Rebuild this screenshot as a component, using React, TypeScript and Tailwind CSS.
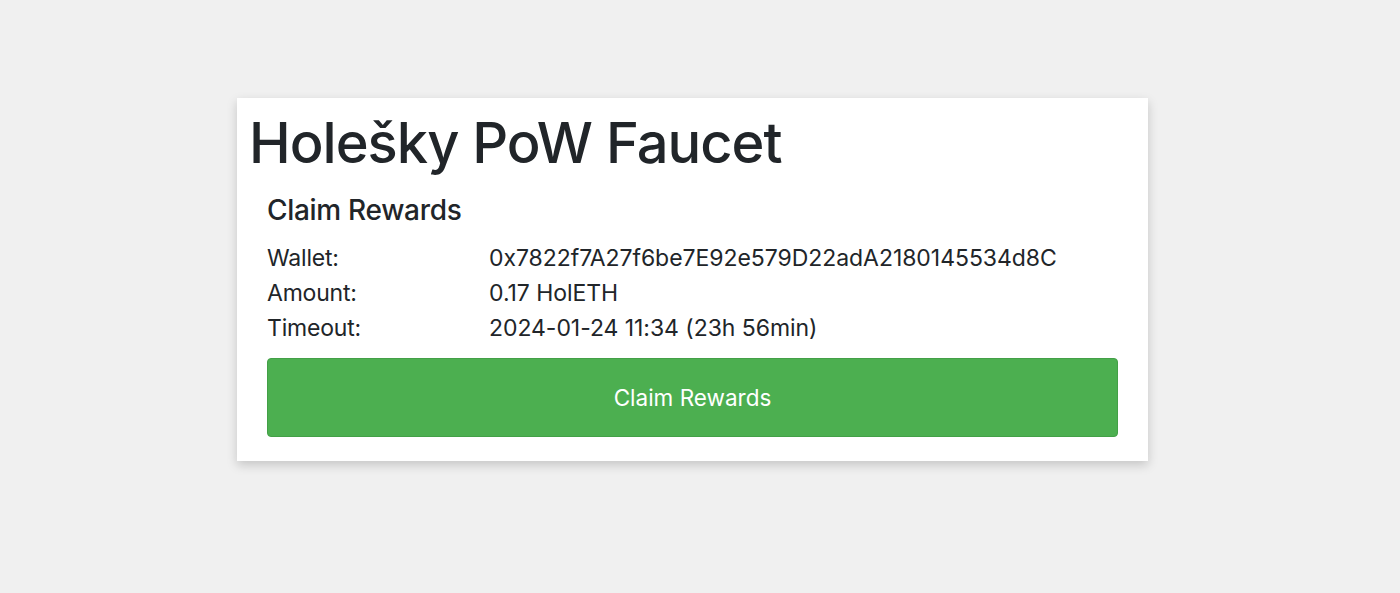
const rows = [
  { label: "Wallet:", value: "0x7822f7A27f6be7E92e579D22adA2180145534d8C" },
  { label: "Amount:", value: "0.17 HolETH" },
  { label: "Timeout:", value: "2024-01-24 11:34 (23h 56min)" },
];

export default function App() {
  return (
    <div
      className="min-h-[593px] w-full bg-[#f0f0f0] pt-[98px] pl-[237px] text-[#212529]"
      style={{ fontFamily: "Inter, 'Noto Sans', sans-serif" }}
    >
      <div className="w-[911px] bg-white pt-[10px] pb-[24px] shadow-[0_4px_10px_rgba(0,0,0,0.18)]">
        <h1 className="pl-[12px] text-[56px] leading-[70px] font-medium tracking-[-1px]">
          Holešky PoW Faucet
        </h1>
        <div className="px-[30px]">
          <h2 className="mt-[15px] text-[28px] leading-[34px] font-medium tracking-[-0.3px]">Claim Rewards</h2>
          <div className="mt-[14px]">
            {rows.map((r) => (
              <div key={r.label} className="flex text-[23px] leading-[35px]">
                <div className="w-[222px] tracking-[-0.2px]">{r.label}</div>
                <div className="tracking-[-0.05px]">{r.value}</div>
              </div>
            ))}
          </div>
          <button className="mt-[12px] h-[79px] w-full rounded-[4px] border border-[#43a047] bg-[#4caf50] text-[22.5px] text-white">
            Claim Rewards
          </button>
        </div>
      </div>
    </div>
  );
}
